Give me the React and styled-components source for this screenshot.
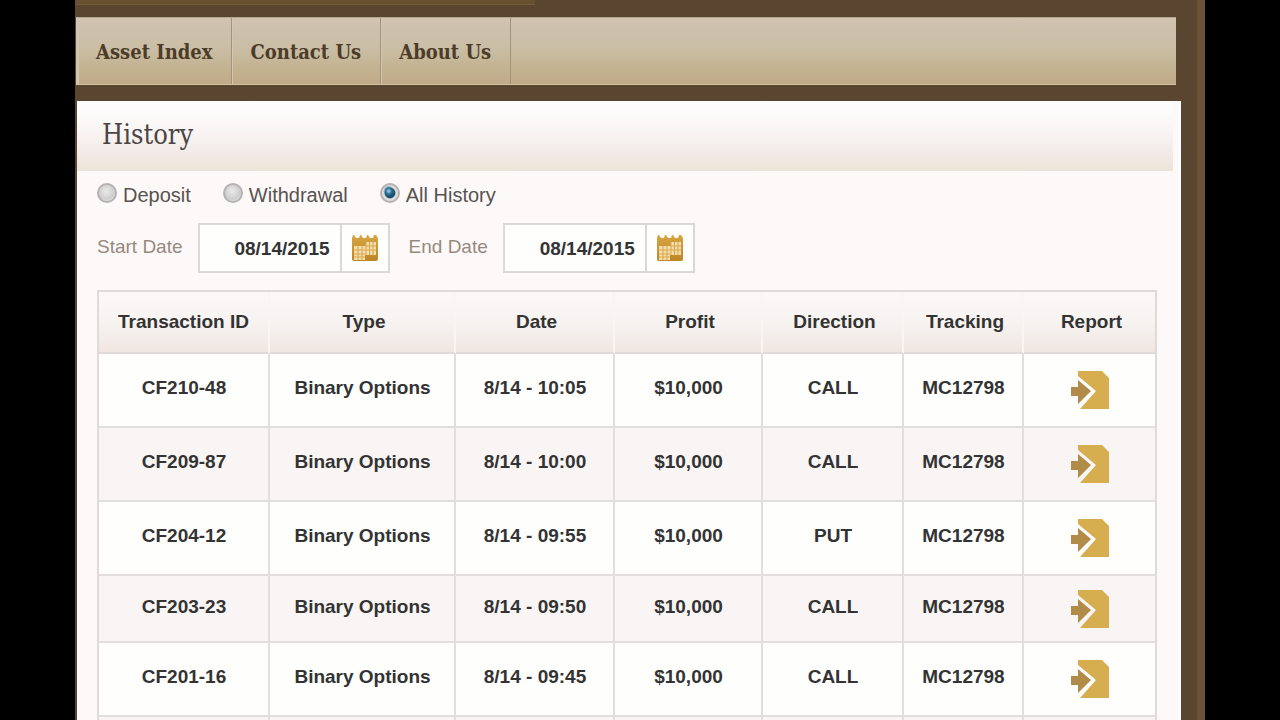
import React, { useState } from "react";
import styled, { createGlobalStyle } from "styled-components";

const GlobalStyle = createGlobalStyle`
  * {
    box-sizing: border-box;
  }

  body {
    margin: 0;
    background: #000;
    font-family: "Liberation Sans", Arial, sans-serif;
    font-size: 19px;
    line-height: 24px;
    color: #333;
  }
`;

const Frame = styled.div`
  height: 100vh;
  margin: 0 75px;
  overflow: hidden;
  background: #594530;
  border-right: 8px solid #6a5239;
`;

const TopStrip = styled.div`
  width: 41%;
  height: 5px;
  margin-bottom: 12px;
  background: #66502f;
  border-bottom: 1px solid #715b3a;
`;

const Nav = styled.nav`
  display: flex;
  height: 68px;
  margin: 0 21px 16px 1px;
  background: linear-gradient(#d0c3b0, #cabea6 45%, #c3b391 75%, #c0aa8a);
  border-top: 1px solid #b5a78f;
  border-bottom: 1px solid #d3c3a2;
  border-left: 2px solid #d2c5b0;
`;

const NavItem = styled.a`
  display: flex;
  align-items: center;
  padding: 2px 19px 0 18px;
  border-right: 1px solid #a29379;
  box-shadow: inset 1px 0 #d3c7b1;
  font-family: "DejaVu Serif Condensed", "DejaVu Serif", serif;
  font-size: 20px;
  font-weight: bold;
  color: #4c3c29;
  text-decoration: none;
  white-space: nowrap;
`;

const Panel = styled.main`
  margin: 0 16px 0 2px;
  background: #fdf9f8;
  border-right: 2px solid #fffdfd;
`;

const PanelHeader = styled.header`
  display: flex;
  align-items: center;
  height: 70px;
  margin-right: 6px;
  padding: 0 25px 2px;
  background: linear-gradient(#fefdfd, #faf6f6 40%, #f2eae6 75%, #ede4d8);
`;

const Title = styled.h1`
  margin: 0;
  font-family: "DejaVu Serif Condensed", "DejaVu Serif", serif;
  font-size: 27px;
  font-weight: normal;
  line-height: 32px;
  color: #4b4543;
`;

const Content = styled.div`
  padding: 12px 22px 0 20px;
`;

const Filters = styled.div`
  display: flex;
  gap: 32px;
  margin-bottom: 16px;
`;

const FilterLabel = styled.label`
  display: flex;
  gap: 6px;
  font-size: 20px;
  color: #575350;
`;

const Radio = styled.input`
  appearance: none;
  width: 20px;
  height: 20px;
  margin: 0;
  border: 2px solid #b5b2b1;
  border-radius: 50%;
  background: radial-gradient(circle at 45% 40%, #e6e6e6 10%, #cdcdcd 60%, #e2e2e2 75%);

  &:checked {
    background: radial-gradient(circle at 42% 38%, #a8d8ea 0, #2b7196 22%, transparent 40%),
      radial-gradient(circle, #1d4f70 42%, #dcdcdc 52%);
  }
`;

const Dates = styled.div`
  display: flex;
  gap: 19px;
  margin-bottom: 17px;
`;

const DateField = styled.div`
  display: flex;
  gap: 15px;
`;

const DateLabel = styled.label`
  padding-top: 12px;
  color: #96897f;
  white-space: nowrap;
`;

const DateBox = styled.div`
  display: flex;
  height: 50px;
  border: 2px solid #dcd8d6;
  background: #fefefd;
`;

const DateInput = styled.input`
  width: 142px;
  padding: 2px 10px 0 0;
  border: 0;
  border-right: 2px solid #dcd8d6;
  background: transparent;
  font: inherit;
  font-weight: bold;
  color: #333;
  text-align: right;
  outline: none;
`;

const IconButton = styled.button`
  display: flex;
  align-items: center;
  justify-content: center;
  width: 46px;
  padding: 0;
  border: 0;
  background: transparent;
  cursor: pointer;
`;

const Table = styled.table`
  width: 100%;
  table-layout: fixed;
  border: 2px solid #dfdbd9;
  border-collapse: separate;
  border-spacing: 0;
  font-weight: bold;
  text-align: center;
`;

const Th = styled.th`
  width: ${(props) => props.$width}px;
  height: 62px;
  padding: 0 0 0 4px;
  background: linear-gradient(#fbf8f7, #f7f3f1 50%, #f0e6e1);
  border-bottom: 2px solid #dfdbd9;
  border-right: 2px solid #faf5f2;

  &:first-child {
    padding: 0;
  }

  &:last-child {
    border-right: 0;
  }
`;

const Row = styled.tr`
  height: ${(props) => props.$height}px;
  background: #fefefd;

  &:nth-child(even) {
    background: #f9f5f4;
  }
`;

const Td = styled.td`
  padding: 0 0 4px 1px;
  border-right: 2px solid #e2dedc;
  border-bottom: 2px solid #e2dedc;

  &:last-child {
    padding: 0;
    border-right: 0;
  }
`;

const ReportLink = styled.a`
  display: flex;
  justify-content: center;
`;

const CalendarIcon = () => (
  <svg width="28" height="28" viewBox="0 0 28 28" aria-hidden="true">
    <defs>
      <linearGradient id="gold" x1="0" y1="0" x2="0" y2="1">
        <stop offset="0" stopColor="#d9a543" />
        <stop offset="1" stopColor="#bd8628" />
      </linearGradient>
    </defs>
    <path
      d="M1 4 L2 1 H3 L5 4 H8 L9 1 H10 L12 4 H15 L16 1 H17 L19 4 H22 L23 1 H25 L27 4 V25 Q27 27 25 27 H3 Q1 27 1 25 Z"
      fill="url(#gold)"
    />
    <path d="M15 8 H25 V21 H14 V26 H3 V12 H15 Z" fill="#f2dcaa" />
    <path
      d="M7 12 V26 M11 12 V26 M15 8 V21 M18.5 8 V21 M22 8 V21 M15 12 H25 M3 16 H25 M3 20 H14 M3 23 H14"
      stroke="#d9a84c"
      strokeWidth="1"
      fill="none"
    />
  </svg>
);

const ReportIcon = () => (
  <svg width="40" height="40" viewBox="0 0 40 40" aria-hidden="true">
    <path d="M8 1 H32 L39 8 V39 H10 L26 21 L8 6 Z" fill="#d7ae4f" />
    <path d="M1 17 H8 V10 L21 21 L8 34 V26 H1 Z" fill="#b08c48" />
  </svg>
);

const navItems = ["Asset Index", "Contact Us", "About Us"];

const filters = ["Deposit", "Withdrawal", "All History"];

const columns = [
  { name: "Transaction ID", width: 171 },
  { name: "Type", width: 186 },
  { name: "Date", width: 159 },
  { name: "Profit", width: 148 },
  { name: "Direction", width: 141 },
  { name: "Tracking", width: 120 },
  { name: "Report", width: 131 },
];

const transactions = [
  { id: "CF210-48", date: "8/14 - 10:05", direction: "CALL", height: 74 },
  { id: "CF209-87", date: "8/14 - 10:00", direction: "CALL", height: 74 },
  { id: "CF204-12", date: "8/14 - 09:55", direction: "PUT", height: 74 },
  { id: "CF203-23", date: "8/14 - 09:50", direction: "CALL", height: 67 },
  { id: "CF201-16", date: "8/14 - 09:45", direction: "CALL", height: 74 },
];

function DatePicker({ id, label }) {
  const [value, setValue] = useState("08/14/2015");

  return (
    <DateField>
      <DateLabel htmlFor={id}>{label}</DateLabel>
      <DateBox>
        <DateInput
          id={id}
          type="text"
          value={value}
          onChange={(e) => setValue(e.target.value)}
        />
        <IconButton type="button" aria-label={`Choose ${label}`}>
          <CalendarIcon />
        </IconButton>
      </DateBox>
    </DateField>
  );
}

export default function App() {
  const [filter, setFilter] = useState("All History");

  return (
    <>
      <GlobalStyle />
      <Frame>
        <TopStrip />
        <Nav>
          {navItems.map((item) => (
            <NavItem key={item} href="#">
              {item}
            </NavItem>
          ))}
        </Nav>
        <Panel>
          <PanelHeader>
            <Title>History</Title>
          </PanelHeader>
          <Content>
            <Filters>
              {filters.map((name) => (
                <FilterLabel key={name}>
                  <Radio
                    type="radio"
                    name="filter"
                    checked={filter === name}
                    onChange={() => setFilter(name)}
                  />
                  {name}
                </FilterLabel>
              ))}
            </Filters>
            <Dates>
              <DatePicker id="start-date" label="Start Date" />
              <DatePicker id="end-date" label="End Date" />
            </Dates>
            <Table>
              <thead>
                <tr>
                  {columns.map((col) => (
                    <Th key={col.name} $width={col.width}>
                      {col.name}
                    </Th>
                  ))}
                </tr>
              </thead>
              <tbody>
                {transactions.map((t) => (
                  <Row key={t.id} $height={t.height}>
                    <Td>{t.id}</Td>
                    <Td>Binary Options</Td>
                    <Td>{t.date}</Td>
                    <Td>$10,000</Td>
                    <Td>{t.direction}</Td>
                    <Td>MC12798</Td>
                    <Td>
                      <ReportLink href="#" aria-label={`Report ${t.id}`}>
                        <ReportIcon />
                      </ReportLink>
                    </Td>
                  </Row>
                ))}
                <Row $height={74}>
                  {columns.map((col) => (
                    <Td key={col.name} />
                  ))}
                </Row>
              </tbody>
            </Table>
          </Content>
        </Panel>
      </Frame>
    </>
  );
}
